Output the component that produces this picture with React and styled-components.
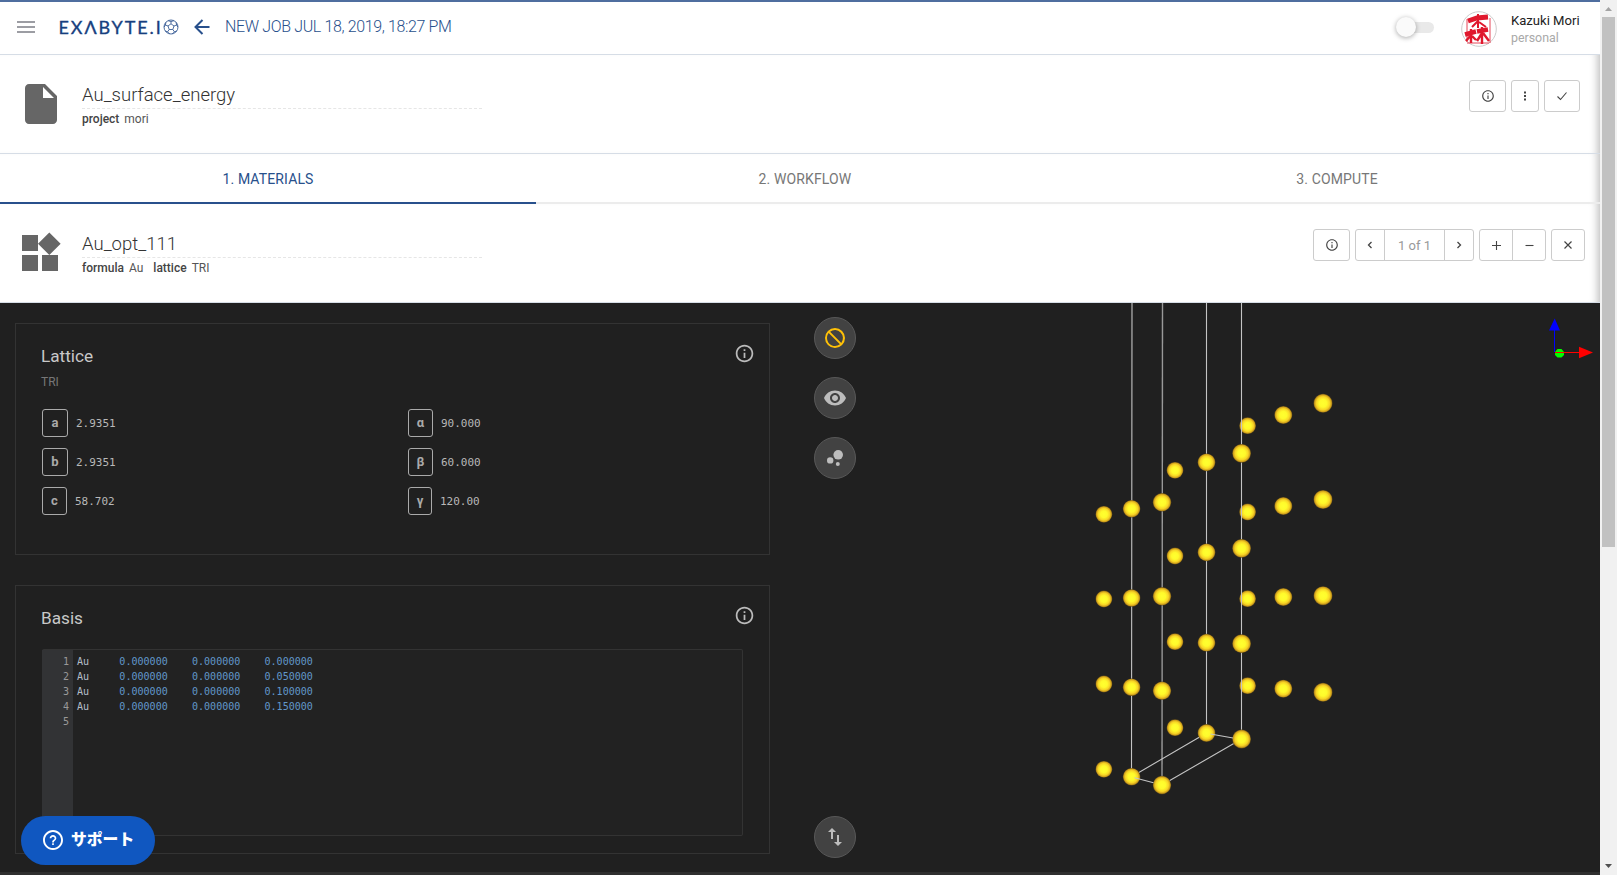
import React from "react";
import styled, { createGlobalStyle } from "styled-components";

const Global = createGlobalStyle`
  * { box-sizing: border-box; }
  body { margin: 0; overflow: hidden; font-family: Roboto, "Liberation Sans", sans-serif; background: #fff; }
`;

const Shell = styled.div`
  display: flex;
  width: 1617px;
  height: 875px;
`;

const Page = styled.div`
  width: 1600px;
  height: 875px;
  display: flex;
  flex-direction: column;
  border-top: 2px solid #4f6e9f;
  background: #fff;
`;

const TopBar = styled.header`
  display: flex;
  align-items: center;
  height: 53px;
  padding: 0 20px 3px 17px;
  border-bottom: 1px solid #d6dde6;
`;

const MenuLines = styled.div`
  width: 18px;
  height: 12px;
  border-top: 2px solid #9c9da3;
  border-bottom: 2px solid #9c9da3;
  display: flex;
  align-items: center;
  &::before { content: ""; width: 100%; height: 2px; background: #9c9da3; }
`;

const Logo = styled.div`
  display: flex;
  align-items: center;
  width: 120px;
  margin-left: 23.5px;
  color: #173f7f;
  svg { flex: none; margin-top: 1px; }
`;

const LogoText = styled.span`
  width: 104px;
  font: 400 18px/20px Lato, sans-serif;
  letter-spacing: 1.9px;
  -webkit-text-stroke: 0.35px #173f7f;
  white-space: nowrap;
`;

const BackArrow = styled.svg`
  margin-left: 15px;
`;

const JobTitle = styled.h1`
  margin: 0 auto 0 15.5px;
  font-size: 16px;
  font-weight: 300;
  line-height: 20px;
  letter-spacing: -0.36px;
  color: #28508c;
  white-space: nowrap;
`;

const Toggle = styled.div`
  width: 34px;
  height: 11px;
  border-radius: 6px;
  background: #e9e9e9;
  display: flex;
  align-items: center;
  margin: 1px 27px 0 0;
  &::before {
    content: "";
    width: 20px;
    height: 20px;
    margin-left: -4px;
    border-radius: 50%;
    background: #fafafa;
    box-shadow: 0 1px 5px rgba(0, 0, 0, 0.35);
  }
`;

const Account = styled.div`
  display: flex;
  align-items: center;
  margin-top: 5px;
`;

const AccountText = styled.div`
  width: 69px;
  margin-left: 14px;
  font-size: 13.1px;
  line-height: 17px;
  color: #222;
  white-space: nowrap;
  small { display: block; font-size: 12.4px; line-height: 18px; color: #a9a9a9; }
`;

const EntityBar = styled.section`
  display: flex;
  height: ${(p) => p.$height}px;
  padding: 0 ${(p) => p.$right}px 0 15px;
  border-bottom: 1px solid #d6dde6;
  box-shadow: inset -9px 0 9px -7px rgba(0, 0, 0, 0.28);
`;

const EntityIcon = styled.svg`
  width: 48px;
  height: 48px;
  margin: 25px ${(p) => 18.5 - (p.$shift || 0)}px 0 ${(p) => 0.5 + (p.$shift || 0)}px;
  fill: #666;
`;

const EntityText = styled.div`
  width: 400px;
  margin: 26px auto 0 0;
`;

const EntityName = styled.h2`
  margin: 0;
  height: 28px;
  font-size: 18.5px;
  line-height: 28px;
  font-weight: 300;
  color: #333;
  border-bottom: 1px dashed #e6e6e6;
`;

const EntityMeta = styled.div`
  display: flex;
  gap: 5px;
  font-size: 12px;
  line-height: 20px;
  color: #555;
  b { font-weight: 500; color: #444; }
  b:not(:first-child) { margin-left: 5px; }
`;

const Actions = styled.div`
  display: flex;
  gap: 5px;
  height: 32px;
  margin-top: 25px;
`;

const Group = styled.div`
  display: flex;
`;

const Button = styled.div`
  display: flex;
  align-items: center;
  justify-content: center;
  width: ${(p) => p.$w}px;
  height: 32px;
  border: 1px solid #ccc;
  border-radius: 3px;
  font-size: 13px;
  color: #999;
  ${Group} > &:not(:last-child) { border-top-right-radius: 0; border-bottom-right-radius: 0; }
  ${Group} > &:not(:first-child) { border-top-left-radius: 0; border-bottom-left-radius: 0; margin-left: -1px; }
  svg { fill: none; stroke: #444; }
`;

const Tabs = styled.nav`
  display: grid;
  grid-template-columns: 536px 538px 526px;
  height: 50px;
  box-shadow: inset -9px 0 9px -7px rgba(0, 0, 0, 0.28);
`;

const Tab = styled.div`
  display: flex;
  align-items: center;
  justify-content: center;
  padding-top: 2px;
  border-bottom: 2px solid ${(p) => (p.$active ? "#28508c" : "#ececec")};
  color: ${(p) => (p.$active ? "#28508c" : "#777")};
  font-size: 14px;
  letter-spacing: 0.13px;
`;

const Workspace = styled.main`
  display: flex;
  height: 572px;
  background: #202020;
  border-bottom: 3px solid #2f2f2f;
`;

const Cards = styled.div`
  display: flex;
  flex-direction: column;
  gap: 30px;
  width: 770px;
  padding: 20px 0 0 15px;
`;

const Card = styled.section`
  height: ${(p) => p.$height}px;
  border: 1px solid #333;
  padding: 0 26px;
`;

const CardHead = styled.header`
  display: flex;
  justify-content: space-between;
  height: 53px;
  padding: 19px 0 0;
  margin-right: -12px;
  h3 { margin: 0 0 0 -1px; font-size: 17.2px; line-height: 26px; font-weight: 400; color: #c8c8c8; }
`;

const SubTitle = styled.div`
  margin: -3px 0 0 -1px;
  font-size: 12px;
  line-height: 16px;
  color: #777;
`;

const Params = styled.div`
  display: grid;
  grid-template-columns: 366px 1fr;
  row-gap: 11px;
  margin-top: 19px;
`;

const Param = styled.div`
  display: flex;
  align-items: center;
  gap: 8px;
  height: 28px;
  font: 11px/28px "DejaVu Sans Mono", monospace;
  color: #b8b8b8;
  span { padding-top: 2px; }
`;

const Symbol = styled.b`
  width: ${(p) => p.$w}px;
  height: 28px;
  border: 1px solid #aaa;
  border-radius: 3px;
  font: 700 13px/26px Roboto, sans-serif;
  color: #aaa;
  text-align: center;
`;

const Editor = styled.div`
  display: flex;
  height: 187px;
  margin-top: 10px;
  border: 1px solid #333;
  border-left: 0;
  border-radius: 2px;
  background: #222;
  font: 10.05px/15px "DejaVu Sans Mono", monospace;
`;

const Gutter = styled.div`
  width: 31px;
  padding: 4px 4px 0 0;
  background: #323335;
  color: #999;
  text-align: right;
`;

const Code = styled.pre`
  margin: 0;
  padding: 4px;
  font: inherit;
  color: #6197c9;
  span { color: #b4bcc8; }
`;

const Toolbar = styled.div`
  display: flex;
  flex-direction: column;
  align-items: center;
  gap: 18px;
  width: 42px;
  height: 569px;
  margin-left: 44px;
  padding: 14px 0;
`;

const RoundButton = styled.div`
  display: flex;
  align-items: center;
  justify-content: center;
  flex: none;
  width: 42px;
  height: 42px;
  border: 1px solid #585858;
  border-radius: 50%;
  background: #424242;
  svg { width: 24px; height: 24px; fill: ${(p) => p.$color || "#bdbdbd"}; }
  &:last-child { margin-top: auto; }
`;

const Viewer = styled.svg`
  display: block;
  width: 744px;
  height: 569px;
`;

const Scrollbar = styled.aside`
  display: flex;
  flex-direction: column;
  align-items: center;
  width: 17px;
  height: 875px;
  background: #f1f1f1;
`;

const Thumb = styled.div`
  width: 13px;
  height: 530px;
  margin-bottom: auto;
  background: #c1c1c1;
`;

const Support = styled.div`
  position: fixed;
  left: 21px;
  top: 816px;
  display: flex;
  align-items: center;
  gap: 8px;
  width: 134px;
  height: 49px;
  padding: 0 0 1px 22px;
  border-radius: 25px;
  background: #1057c0;
  color: #fff;
  font: 900 15.8px/20px Roboto, "Noto Sans CJK JP", sans-serif;
  white-space: nowrap;
`;

const GlyphSvg = styled.svg`
  && { fill: ${(p) => p.$color}; stroke: none; }
`;

const InfoIcon = ({ size, color }) => (
  <GlyphSvg width={size} height={size} viewBox="0 0 24 24" $color={color}>
    <path d="M11 7h2v2h-2zm0 4h2v6h-2zm1-9C6.480 2 2 6.480 2 12s4.480 10 10 10 10-4.480 10-10S17.520 2 12 2zm0 18c-4.410 0-8-3.590-8-8s3.590-8 8-8 8 3.590 8 8-3.590 8-8 8z" />
  </GlyphSvg>
);

const Stroke = ({ d, w = 1.4 }) => (
  <svg width="12" height="12" viewBox="0 0 12 12" strokeWidth={w}>
    <path d={d} />
  </svg>
);

const Molecule = () => (
  <svg width="16" height="16" viewBox="0 0 16 16" fill="none" stroke="#3a5d96" strokeWidth="0.9">
    <circle cx="8" cy="8" r="7" />
    <path d="M8 4.800l3 2.200-1.200 3.500H6.200L5 7z M8 4.800V2.500 M11 7l2.600-1 M9.800 10.500l1.700 2.400 M6.200 10.500l-1.700 2.400 M5 7L2.400 6 M8 2.500L5 1.700 M8 2.500l3-.8 M13.600 6l1.200 2 M13.600 6l-.5-2.500 M11.500 12.900l2.300-1 M11.500 12.900l-2.300 1.900 M4.500 12.900l2.300 1.900 M4.500 12.900l-2.300-1 M2.400 6L1.200 8 M2.400 6l.5-2.500" />
  </svg>
);

const Avatar = () => (
  <svg width="36" height="36" viewBox="0 0 36 36">
    <circle cx="18" cy="18" r="17.300" fill="#fff" stroke="#ccc" />
    <g fill="none" stroke="#e0182d">
      <path d="M6 8v23M29 7v25M6 32h22" strokeWidth="0.8" />
      <path d="M7 10l9-3 11-1" strokeWidth="5" />
      <path d="M17 3v14M17 10l-6 6M18 11l7 5" strokeWidth="2" />
      <path d="M4 23.500l11-3M16 20.500l11-2" strokeWidth="4.500" />
      <path d="M10 18v14M10 24l-5 6M11 25l4 4M21 16v17M21 22l-5 8M22 22l6 8" strokeWidth="2.400" />
    </g>
  </svg>
);

// Projected positions of the gold atoms, far columns first.
const atomColumns = [
  { x: 1103.9, r: 8.4, ys: [514.3, 599, 684, 769.3] },
  { x: 1175, r: 8.4, ys: [470.3, 556, 641.7, 727.7] },
  { x: 1247.6, r: 8.4, ys: [425.7, 512, 598.7, 685.7] },
  { x: 1131.6, r: 8.8, ys: [508.7, 598, 687.2, 776.7] },
  { x: 1206.5, r: 8.9, ys: [462.3, 552.3, 642.7, 733] },
  { x: 1283.3, r: 9, ys: [415, 506, 597, 688.7] },
  { x: 1162, r: 9.2, ys: [502.3, 596.3, 690.7, 785] },
  { x: 1241.6, r: 9.4, ys: [453.3, 548.3, 643.7, 739] },
  { x: 1323, r: 9.5, ys: [403.3, 499.5, 595.7, 692.3] },
];

const Atoms = ({ columns }) =>
  columns.flatMap((c) => c.ys.map((y) => <circle key={`${c.x}-${y}`} cx={c.x} cy={y} r={c.r} fill="url(#gold)" />));

const Structure = () => (
  <Viewer viewBox="856 303 744 569">
    <defs>
      <radialGradient id="gold">
        <stop offset="0" stopColor="#ffff30" />
        <stop offset="0.4" stopColor="#fffa2b" />
        <stop offset="0.7" stopColor="#f7d425" />
        <stop offset="0.88" stopColor="#cf9f1c" />
        <stop offset="1" stopColor="#5f4a18" />
      </radialGradient>
    </defs>
    <Atoms columns={atomColumns.slice(0, 3)} />
    <g stroke="#c4c4c4" strokeWidth="1.100" fill="none">
      <path d="M1132 303L1131.500 776M1206.500 303V733M1241.500 303V739" />
      <path d="M1162.500 303L1162 785" stroke="#999" strokeWidth="1.400" />
      <path d="M1131.600 776.700L1206.500 733M1241.600 739L1162 785" />
    </g>
    <Atoms columns={atomColumns.slice(3)} />
    <path d="M1210.500 734L1233 738M1134.500 777.700L1153.500 782.800" stroke="#c4c4c4" strokeWidth="1.100" />
    <path d="M1554.500 352V329" stroke="#00f" />
    <path d="M1554.700 318.500L1560 330.500H1549z" fill="#00f" />
    <path d="M1557.500 349h4l2.500 3v3l-2.500 2.500h-4L1555 355v-3z" fill="#0f0" />
    <path d="M1555 352.500H1580" stroke="#f00" />
    <path d="M1579 346.800L1593 352.500 1579 358.200z" fill="#f00" />
  </Viewer>
);

const rows = ["0.000000", "0.050000", "0.100000", "0.150000"];

const lattice = [
  ["a", 26, "2.9351"],
  ["α", 25, "90.000"],
  ["b", 26, "2.9351"],
  ["β", 25, "60.000"],
  ["c", 25, "58.702"],
  ["γ", 24, "120.00"],
];

export default function App() {
  return (
    <Shell>
      <Global />
      <Page>
        <TopBar>
          <MenuLines />
          <Logo>
            <LogoText>EXΛBYTE.I</LogoText>
            <Molecule />
          </Logo>
          <BackArrow width="16" height="16" viewBox="0 0 16 16" fill="none" stroke="#28508c" strokeWidth="2">
            <path d="M15.500 8H2M8.500 1L1.500 8l7 7" />
          </BackArrow>
          <JobTitle>NEW JOB JUL 18, 2019, 18:27 PM</JobTitle>
          <Toggle />
          <Account>
            <Avatar />
            <AccountText>Kazuki Mori<small>personal</small></AccountText>
          </Account>
        </TopBar>

        <EntityBar $height={99} $right={20}>
          <EntityIcon viewBox="0 0 24 24" $shift={1.5}>
            <path d="M6 2c-1.100 0-1.990.9-1.990 2L4 20c0 1.100.89 2 1.990 2H18c1.100 0 2-.9 2-2V8l-6-6H6zm7 7V3.500L18.500 9H13z" />
          </EntityIcon>
          <EntityText>
            <EntityName>Au_surface_energy</EntityName>
            <EntityMeta><b>project</b><span>mori</span></EntityMeta>
          </EntityText>
          <Actions>
            <Button $w={37}><InfoIcon size={14} color="#444" /></Button>
            <Button $w={28}><Stroke d="M6 1.500v2M6 5v2M6 8.500v2" w={2} /></Button>
            <Button $w={36}><Stroke d="M1.500 6.500L4.500 9.500 10.500 2.500" w={1.1} /></Button>
          </Actions>
        </EntityBar>

        <Tabs>
          <Tab $active>1. MATERIALS</Tab>
          <Tab>2. WORKFLOW</Tab>
          <Tab>3. COMPUTE</Tab>
        </Tabs>

        <EntityBar $height={99} $right={15}>
          <EntityIcon viewBox="0 0 24 24">
            <path d="M13 13v8h8v-8h-8zM3 21h8v-8H3v8zM3 3v8h8V3H3zm13.660-1.310L11 7.340 16.660 13l5.660-5.660-5.660-5.650z" />
          </EntityIcon>
          <EntityText>
            <EntityName>Au_opt_111</EntityName>
            <EntityMeta><b>formula</b><span>Au</span><b>lattice</b><span>TRI</span></EntityMeta>
          </EntityText>
          <Actions>
            <Button $w={37}><InfoIcon size={14} color="#444" /></Button>
            <Group>
              <Button $w={30}><Stroke d="M7.500 3L4.500 6l3 3" w={1.3} /></Button>
              <Button $w={61}>1 of 1</Button>
              <Button $w={30}><Stroke d="M4.500 3l3 3-3 3" w={1.3} /></Button>
            </Group>
            <Group>
              <Button $w={34}><Stroke d="M6.500 2v9M2 6.500h9" w={1.1} /></Button>
              <Button $w={34}><Stroke d="M2.500 6.500h8" w={1.1} /></Button>
            </Group>
            <Button $w={34}><Stroke d="M2.500 2.500l7 7M9.500 2.500l-7 7" w={1.2} /></Button>
          </Actions>
        </EntityBar>

        <Workspace>
          <Cards>
            <Card $height={232}>
              <CardHead><h3>Lattice</h3><InfoIcon size={21} color="#bbb" /></CardHead>
              <SubTitle>TRI</SubTitle>
              <Params>
                {lattice.map(([name, w, value]) => (
                  <Param key={name}><Symbol $w={w}>{name}</Symbol><span>{value}</span></Param>
                ))}
              </Params>
            </Card>
            <Card $height={269}>
              <CardHead><h3>Basis</h3><InfoIcon size={21} color="#bbb" /></CardHead>
              <Editor>
                <Gutter>{[1, 2, 3, 4, 5].map((n) => <div key={n}>{n}</div>)}</Gutter>
                <Code>
                  {rows.map((z) => (
                    <div key={z}><span>Au</span>{`     0.000000    0.000000    ${z}`}</div>
                  ))}
                </Code>
              </Editor>
            </Card>
          </Cards>
          <Toolbar>
            <RoundButton $color="#ffc107">
              <svg viewBox="0 0 24 24"><path d="M12 2a10 10 0 1 0 0 20 10 10 0 0 0 0-20zM4 12c0-1.850.63-3.550 1.690-4.900L16.900 18.310A8 8 0 0 1 4 12zm14.310 4.900L7.100 5.690A8 8 0 0 1 18.310 16.900z" /></svg>
            </RoundButton>
            <RoundButton>
              <svg viewBox="0 0 24 24"><path d="M12 4.500C7 4.500 2.730 7.610 1 12c1.730 4.390 6 7.500 11 7.500s9.270-3.110 11-7.500c-1.730-4.390-6-7.500-11-7.500zM12 17c-2.760 0-5-2.240-5-5s2.240-5 5-5 5 2.240 5 5-2.240 5-5 5zm0-8c-1.660 0-3 1.340-3 3s1.340 3 3 3 3-1.340 3-3-1.340-3-3-3z" /></svg>
            </RoundButton>
            <RoundButton>
              <svg viewBox="0 0 24 24"><circle cx="7.200" cy="14.400" r="3.200" /><circle cx="14.800" cy="18" r="2" /><circle cx="15.200" cy="8.800" r="4.800" /></svg>
            </RoundButton>
            <RoundButton>
              <svg viewBox="0 0 24 24"><path d="M16 17.010V10h-2v7.010h-3L15 21l4-3.990h-3zM9 3L5 6.990h3V14h2V6.990h3L9 3z" /></svg>
            </RoundButton>
          </Toolbar>
          <Structure />
        </Workspace>
      </Page>
      <Scrollbar>
        <svg width="17" height="17" viewBox="0 0 17 17"><path d="M8.500 7L12 11H5z" fill="#a3a3a3" /></svg>
        <Thumb />
        <svg width="17" height="17" viewBox="0 0 17 17"><path d="M8.500 10L12 6H5z" fill="#505050" /></svg>
      </Scrollbar>
      <Support>
        <svg width="20" height="20" viewBox="0 0 24 24" fill="#fff"><path d="M11 18h2v-2h-2v2zm1-18C5.400 0 0 5.400 0 12s5.400 12 12 12 12-5.400 12-12S18.600 0 12 0zm0 21.700c-5.300 0-9.700-4.400-9.700-9.700S6.700 2.300 12 2.300s9.700 4.400 9.700 9.700-4.400 9.700-9.700 9.700zM12 6c-2.210 0-4 1.790-4 4h2c0-1.100.9-2 2-2s2 .9 2 2c0 2-3 1.750-3 5h2c0-2.250 3-2.500 3-5 0-2.210-1.790-4-4-4z" /></svg>
        サポート
      </Support>
    </Shell>
  );
}
